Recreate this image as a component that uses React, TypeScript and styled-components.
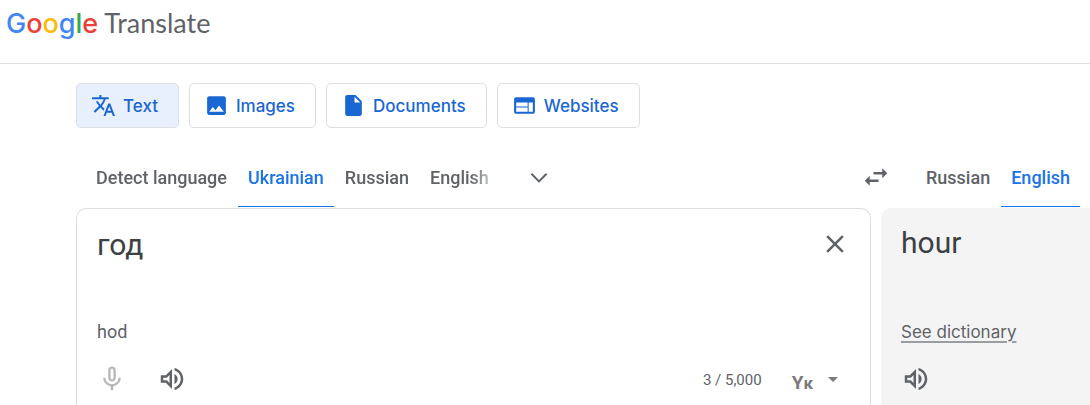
import React, { useState } from "react";
import styled, { createGlobalStyle } from "styled-components";
import {
  MdArrowDropDown,
  MdClose,
  MdImage,
  MdInsertDriveFile,
  MdMicNone,
  MdOutlineVolumeUp,
  MdSwapHoriz,
  MdTranslate,
  MdWeb,
} from "react-icons/md";

const brandFont = '"Inter", "Roboto", sans-serif';
const textFont = '"Roboto", "Noto Sans", sans-serif';
const grey = "#5f6368";
const blue = "#1a73e8";
const line = "#dcdee0";

const GlobalStyle = createGlobalStyle`
  *, *::before, *::after { box-sizing: border-box; }
  body { margin: 0; background: #fff; font-family: ${textFont}; color: ${grey}; }
  button, textarea { font: inherit; color: inherit; }
`;

const Page = styled.div`
  display: flex;
  flex-direction: column;
  min-height: 100vh;
`;

const Header = styled.header`
  height: 64px;
  padding: 6px 6px 0;
  border-bottom: 1px solid ${line};
`;

const Brand = styled.a`
  display: inline-flex;
  align-items: baseline;
  gap: 6px;
  font-family: "Lato", ${brandFont};
  font-size: 27px;
  line-height: 34px;
  color: ${grey};
  text-decoration: none;
`;

const Wordmark = styled.span`
  font-family: ${brandFont};
  font-size: 27px;
  font-weight: 500;
`;

const Letter = styled.span<{ $color: string }>`
  color: ${(p) => p.$color};
`;

const Modes = styled.nav`
  display: flex;
  gap: 10px;
  padding: 19px 0 0 76px;
`;

const ModeButton = styled.button<{ $active?: boolean }>`
  display: flex;
  align-items: center;
  gap: 7px;
  height: 45px;
  padding: 0 20px 0 14px;
  border: 1px solid ${line};
  border-radius: 5px;
  background: ${(p) => (p.$active ? "#e8f0fe" : "#fff")};
  color: #1967d2;
  font-family: ${brandFont};
  font-size: 17px;
  font-weight: 500;
  cursor: pointer;

  svg {
    flex: none;
  }
`;

const Main = styled.main`
  flex: 1;
  display: flex;
  flex-direction: column;
  gap: 1px;
  padding-left: 76px;
`;

const Columns = styled.div`
  display: grid;
  grid-template-columns: minmax(0, 795fr) minmax(0, 209fr);
  column-gap: 10px;
`;

const LanguageBar = styled(Columns)`
  margin-top: 19px;
`;

const Panels = styled(Columns)`
  flex: 1;
`;

const SourceLanguages = styled.div`
  display: flex;
  align-items: center;
  padding-left: 10px;
`;

const TargetLanguages = styled.div`
  display: flex;
  gap: 1px;
  padding-left: 35px;
`;

const TabStrip = styled.div`
  display: flex;
  gap: 1px;
  width: 404px;
  overflow: hidden;
  mask-image: linear-gradient(to right, #000 385px, transparent 415px);
`;

const Tab = styled.button<{ $active?: boolean }>`
  flex: none;
  height: 60px;
  padding: 1px 10px 0;
  border: 0;
  border-bottom: 1px solid ${(p) => (p.$active ? blue : "transparent")};
  background: none;
  color: ${(p) => (p.$active ? blue : grey)};
  font-size: 18px;
  font-weight: 500;
  white-space: nowrap;
  cursor: pointer;
`;

const IconButton = styled.button<{ $dim?: boolean }>`
  display: flex;
  flex: none;
  align-items: center;
  justify-content: center;
  width: 50px;
  height: 50px;
  padding: 0;
  border: 0;
  background: none;
  color: ${(p) => (p.$dim ? "#b4b6b8" : grey)};
  cursor: pointer;
`;

const MoreButton = styled(IconButton)`
  margin-left: 24px;
`;

const SwapButton = styled(IconButton)`
  margin: 0 -30px 0 auto;
`;

const SourcePanel = styled.section`
  display: flex;
  flex-direction: column;
  border: 1px solid ${line};
  border-bottom: 0;
  border-radius: 10px 10px 0 0;
`;

const TargetPanel = styled.section`
  display: flex;
  flex-direction: column;
  padding-left: 20px;
  border-radius: 10px 0 0 0;
  background: #f4f4f4;
`;

const SourceRow = styled.div`
  display: flex;
  padding: 10px 10px 0 20px;
`;

const SourceInput = styled.textarea`
  flex: 1;
  min-width: 0;
  height: 90px;
  padding: 6px 0 0;
  border: 0;
  outline: 0;
  resize: none;
  background: none;
  color: #3c4043;
  font-size: 30px;
  line-height: 40px;
`;

const Translation = styled.p`
  height: 100px;
  margin: 0;
  padding-top: 15px;
  color: #3c4043;
  font-size: 30px;
  line-height: 40px;
`;

const Romanized = styled.p`
  margin: 0;
  padding: 11px 20px 10px;
  font-size: 18px;
  line-height: 24px;
  height: 45px;
`;

const DictionaryRow = styled.div`
  height: 46px;
  padding: 12px 0;
`;

const DictionaryLink = styled.a`
  color: ${grey};
  font-family: ${brandFont};
  font-size: 17px;
  line-height: 24px;
  text-decoration: underline;
  text-decoration-color: #9a9da1;
  text-decoration-thickness: 2px;
  text-underline-offset: 3px;
`;

const Tools = styled.div`
  display: flex;
  align-items: center;
  gap: 10px;
  height: 50px;
`;

const SourceTools = styled(Tools)`
  padding: 0 25px 0 10px;
`;

const TargetTools = styled(Tools)`
  margin-left: -10px;
`;

const Count = styled.span`
  margin-left: auto;
  padding-top: 2px;
  font-size: 15px;
`;

const KeyboardButton = styled.button`
  display: flex;
  align-items: center;
  gap: 8px;
  margin-left: 20px;
  padding: 0;
  border: 0;
  background: none;
  color: #7a7a7a;
  cursor: pointer;
`;

const KeyboardGlyph = styled.span`
  padding-top: 8px;
  font-size: 19px;
  line-height: 24px;
  font-weight: 700;

  small {
    font-size: 17px;
  }
`;

const ChevronDown = () => (
  <svg width="20" height="20" viewBox="0 0 20 20" fill="none" stroke="currentColor" strokeWidth="2" aria-hidden="true">
    <path d="M2.4 6.8 10 14.4l7.6-7.6" />
  </svg>
);

const letters: [string, string][] = [
  ["G", "#4285f4"],
  ["o", "#ea4335"],
  ["o", "#fbbc05"],
  ["g", "#4285f4"],
  ["l", "#34a853"],
  ["e", "#ea4335"],
];

const modes = [
  { label: "Text", Icon: MdTranslate },
  { label: "Images", Icon: MdImage },
  { label: "Documents", Icon: MdInsertDriveFile },
  { label: "Websites", Icon: MdWeb },
];

const sourceTabs = ["Detect language", "Ukrainian", "Russian", "English"];
const targetTabs = ["Russian", "English"];

export default function App() {
  const [mode, setMode] = useState("Text");
  const [source, setSource] = useState("Ukrainian");
  const [target, setTarget] = useState("English");
  const [text, setText] = useState("год");

  return (
    <Page>
      <GlobalStyle />
      <Header>
        <Brand href="#">
          <Wordmark>
            {letters.map(([letter, color], i) => (
              <Letter key={i} $color={color}>{letter}</Letter>
            ))}
          </Wordmark>
          <span>Translate</span>
        </Brand>
      </Header>
      <Modes>
        {modes.map(({ label, Icon }) => (
          <ModeButton key={label} $active={label === mode} onClick={() => setMode(label)}>
            <Icon size={25} />
            {label}
          </ModeButton>
        ))}
      </Modes>
      <Main>
        <LanguageBar>
          <SourceLanguages>
            <TabStrip>
              {sourceTabs.map((name) => (
                <Tab key={name} $active={name === source} onClick={() => setSource(name)}>
                  {name}
                </Tab>
              ))}
            </TabStrip>
            <MoreButton aria-label="More source languages">
              <ChevronDown />
            </MoreButton>
            <SwapButton aria-label="Swap languages">
              <MdSwapHoriz size={30} />
            </SwapButton>
          </SourceLanguages>
          <TargetLanguages>
            {targetTabs.map((name) => (
              <Tab key={name} $active={name === target} onClick={() => setTarget(name)}>
                {name}
              </Tab>
            ))}
          </TargetLanguages>
        </LanguageBar>
        <Panels>
          <SourcePanel>
            <SourceRow>
              <SourceInput
                aria-label="Source text"
                spellCheck={false}
                value={text}
                onChange={(e) => setText(e.target.value)}
              />
              <IconButton aria-label="Clear source text" onClick={() => setText("")}>
                <MdClose size={30} />
              </IconButton>
            </SourceRow>
            <Romanized>hod</Romanized>
            <SourceTools>
              <IconButton $dim aria-label="Translate by voice">
                <MdMicNone size={30} />
              </IconButton>
              <IconButton aria-label="Listen to source text">
                <MdOutlineVolumeUp size={30} />
              </IconButton>
              <Count>{text.length} / 5,000</Count>
              <KeyboardButton aria-label="Input tools">
                <KeyboardGlyph>
                  Y<small>к</small>
                </KeyboardGlyph>
                <MdArrowDropDown size={24} />
              </KeyboardButton>
            </SourceTools>
          </SourcePanel>
          <TargetPanel>
            <Translation>hour</Translation>
            <DictionaryRow>
              <DictionaryLink href="#">See dictionary</DictionaryLink>
            </DictionaryRow>
            <TargetTools>
              <IconButton aria-label="Listen to translation">
                <MdOutlineVolumeUp size={30} />
              </IconButton>
            </TargetTools>
          </TargetPanel>
        </Panels>
      </Main>
    </Page>
  );
}
